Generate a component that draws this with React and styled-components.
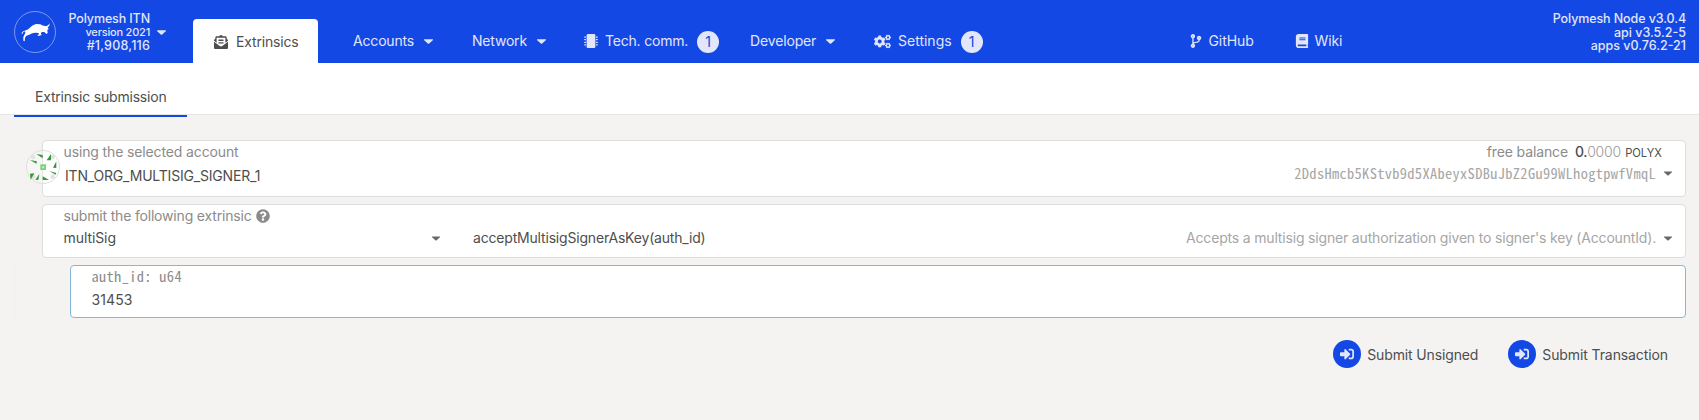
import React from "react";
import styled, { createGlobalStyle } from "styled-components";
import {
  FaBook,
  FaCaretDown,
  FaCodeBranch,
  FaCogs,
  FaEnvelopeOpenText,
  FaMicrochip,
  FaQuestionCircle,
  FaSignInAlt,
} from "react-icons/fa";

const blue = "#1348e4";
const onBlue = "#e1e6f9";

const GlobalStyle = createGlobalStyle`
  * { box-sizing: border-box; }
  body {
    margin: 0;
    background: #f4f3f1;
    color: #4e4e4e;
    font: 400 14px/20px Inter, "Liberation Sans", sans-serif;
  }
`;

const Page = styled.div`
  min-height: 420px;
  overflow: hidden;
`;

const Text = styled.span`
  white-space: nowrap;
  letter-spacing: ${(p) => p.$track || 0}px;
`;

/* Top bar */

const Header = styled.header`
  display: flex;
  height: 63px;
  padding: 0 13px 0 14px;
  background: ${blue};
  color: ${onBlue};
`;

const Chain = styled.div`
  display: flex;
  align-items: flex-start;
  width: 179px;
  padding-top: 11px;
`;

const Logo = styled.svg`
  width: 42px;
  height: 42px;
  flex: none;
`;

const Lines = styled.div`
  display: flex;
  flex-direction: column;
  align-items: flex-end;
  flex: none;
  font-size: 12.5px;
  font-weight: 450;
  line-height: 13.5px;
`;

const ChainLines = styled(Lines)`
  width: 94px;
  padding-top: 1px;
  font-weight: 500;
`;

const Version = styled(Text)`
  font-size: 11px;
`;

const Caret = styled(FaCaretDown)`
  flex: none;
  width: ${(p) => p.$width || 9}px;
  height: 14px;
  transform: scaleX(1.1);
`;

const ChainCaret = styled(Caret)`
  margin: 14px 0 0 7px;
`;

const Nav = styled.nav`
  display: flex;
  flex: 1;
`;

const ActiveTab = styled.a`
  display: flex;
  align-items: center;
  gap: 8px;
  width: 125px;
  height: 44px;
  margin: 19px 35px 0 0;
  padding: 1px 0 0 21px;
  border-radius: 4px 4px 0 0;
  background: #fff;
  color: #4e4e4e;
`;

const NavItem = styled.a`
  display: flex;
  align-items: center;
  gap: ${(p) => p.$gap || 7}px;
  width: ${(p) => p.$width}px;
  height: 22px;
  margin-top: 30px;
`;

const NavCaret = styled(Caret)`
  margin-left: 3px;
`;

const Badge = styled.span`
  width: 22px;
  height: 22px;
  margin: 2px 0 0 2px;
  border-radius: 50%;
  background: ${onBlue};
  color: ${blue};
  line-height: 22px;
  text-align: center;
`;

const Versions = styled(Lines)`
  padding-top: 12px;
`;

/* Sub navigation */

const Tabs = styled.div`
  height: 52px;
  padding-left: 14px;
  border-bottom: 1px solid #e6e5e4;
  background: #fff;
`;

const Tab = styled.div`
  width: 173px;
  height: 54px;
  padding: 24px 0 0 21px;
  border-bottom: 2px solid ${blue};
`;

/* Form */

const Form = styled.main`
  display: flex;
  flex-direction: column;
  padding: 25px 13px 0 42px;
`;

const Card = styled.section`
  position: relative;
  display: flex;
  height: ${(p) => p.$height}px;
  margin-bottom: 7px;
  padding: 1px 13px 0 20.5px;
  border: 1px solid #dcdddd;
  border-radius: 4px;
  background: #fff;
`;

const FocusedCard = styled(Card)`
  margin: 0 0 0 28px;
  padding-top: 0;
  border-color: #85b7d9;
`;

const Column = styled.div`
  display: flex;
  flex-direction: column;
  align-items: ${(p) => (p.$end ? "flex-end" : "flex-start")};
  gap: ${(p) => p.$gap || 0}px;
  flex: ${(p) => (p.$width ? `0 0 ${p.$width}px` : "1")};
`;

const FormLabel = styled(Text)`
  display: flex;
  align-items: center;
  color: #8b8b8b;
`;

const MonoLabel = styled(FormLabel)`
  font-family: "Noto Sans Mono CJK SC", "DejaVu Sans Mono", monospace;
  font-size: 14.4px;
`;

const AccountName = styled(Text)`
  padding-left: 1.5px;
`;

const HelpIcon = styled(FaQuestionCircle)`
  width: 14px;
  height: 14px;
  margin-left: 4.5px;
`;

const Hint = styled(Text)`
  color: #a6a6a6;
`;

const Address = styled(Hint)`
  font-family: "Noto Sans Mono CJK SC", "DejaVu Sans Mono", monospace;
  font-size: 14.4px;
`;

const Select = styled.div`
  display: flex;
  align-items: center;
  gap: 8px;
`;

const SelectCaret = styled(Caret)`
  color: #686868;
`;

const Balance = styled.div`
  display: flex;
  align-items: baseline;
  margin-right: 10px;
`;

const Amount = styled(Text)`
  margin-left: 7px;
  font-weight: 500;
`;

const Decimals = styled(Text)`
  color: #999;
  font-weight: 300;
`;

const Unit = styled(Text)`
  margin-left: 4px;
  font-size: 11.2px;
`;

const Identicon = styled.svg`
  position: absolute;
  top: 9px;
  left: -17px;
  width: 34px;
  height: 34px;
`;

const Method = styled.div`
  display: flex;
  flex: 1;
  align-items: center;
  height: 20px;
  margin-top: 22px;
`;

const SectionCaret = styled(SelectCaret)`
  margin: 0 33px 0 -40px;
`;

const MethodHint = styled(Hint)`
  margin: 0 8px 0 auto;
`;

const Params = styled.div`
  position: relative;

  &::before {
    content: "";
    position: absolute;
    top: -1px;
    left: -28px;
    width: 2px;
    height: 57px;
    background: #f1f1f0;
  }
`;

const Actions = styled.div`
  display: flex;
  justify-content: flex-end;
  gap: 30px;
  margin: 22px 18px 0 0;
`;

const Action = styled.button`
  display: flex;
  align-items: center;
  gap: 6px;
  padding: 0;
  border: 0;
  background: none;
  color: inherit;
  font: inherit;
`;

const ActionIcon = styled.span`
  display: grid;
  place-items: center;
  width: 28px;
  height: 28px;
  border-radius: 50%;
  background: ${blue};
  color: ${onBlue};
`;

const ActionText = styled(Text)`
  padding-top: 2px;
`;

const triangles = [
  "43,24 62,27 62,37",
  "87,24 87,43 74,43",
  "103,46 103,66 93,65",
  "82,75 103,81 101,86",
  "62,91 81,102 62,102",
  "52,84 49,102 40,101",
  "24,83 37,82 26,101",
  "24,42 44,46 44,53",
];

const dots = [
  [33, 33],
  [92, 33],
  [92, 92],
  [33, 92],
];

function BullLogo() {
  return (
    <Logo viewBox="0 0 126 126">
      <circle cx="63" cy="63" r="61.5" fill="none" stroke="#fff" strokeOpacity=".55" strokeWidth="2.4" />
      <path
        fill="#fff"
        d="M22 67Q26 59 36 58Q43 56 49 49Q56 41 66 39L79 40Q85 45 91 44L96 46Q103 44 107 37Q108 45 101 49L104 54L100 57L101 66L97 69L91 63L84 63L80 67L83 72L73 75L70 72L76 70L73 66Q60 64 50 69Q44 72 37 74L33 80L32 91L28 89L28 78L34 66L33 61Q27 62 25 69z"
      />
    </Logo>
  );
}

function AccountIdenticon() {
  return (
    <Identicon viewBox="12 12 102 102">
      <circle cx="63" cy="63" r="49.5" fill="#fff" fillOpacity=".25" stroke="#dedede" strokeWidth="3" />
      {dots.map(([x, y]) => (
        <circle key={`${x}-${y}`} cx={x} cy={y} r="7" fill="#e2e2e2" />
      ))}
      {triangles.map((points) => (
        <polygon key={points} points={points} fill="#329837" />
      ))}
      <rect x="55" y="55" width="17" height="17" fill="#74d477" />
      <path d="M63.500 59l4.500 4.500l-4.500 4.500l-4.500-4.500z" fill="#c5edc5" />
    </Identicon>
  );
}

export default function App() {
  return (
    <Page>
      <GlobalStyle />
      <Header>
        <Chain>
          <BullLogo />
          <ChainLines>
            <Text $track={-0.12}>Polymesh ITN</Text>
            <Version $track={-0.2}>version 2021</Version>
            <Text $track={0.2}>#1,908,116</Text>
          </ChainLines>
          <ChainCaret />
        </Chain>
        <Nav>
          <ActiveTab>
            <FaEnvelopeOpenText size={14} />
            <Text $track={-0.17}>Extrinsics</Text>
          </ActiveTab>
          <NavItem $width={119}>
            <Text $track={-0.17}>Accounts</Text>
            <NavCaret />
          </NavItem>
          <NavItem $width={112}>
            <Text $track={-0.2}>Network</Text>
            <NavCaret />
          </NavItem>
          <NavItem $width={166}>
            <FaMicrochip size={14} />
            <Text $track={-0.2}>Tech. comm.</Text>
            <Badge>1</Badge>
          </NavItem>
          <NavItem $width={124}>
            <Text $track={-0.15}>Developer</Text>
            <NavCaret />
          </NavItem>
          <NavItem $width={315}>
            <FaCogs size={17} />
            <Text>Settings</Text>
            <Badge>1</Badge>
          </NavItem>
          <NavItem $width={106} $gap={5.5}>
            <FaCodeBranch size={14} />
            <Text $track={-0.08}>GitHub</Text>
          </NavItem>
          <NavItem $width={60} $gap={5.5}>
            <FaBook size={14} />
            <Text $track={-0.1}>Wiki</Text>
          </NavItem>
        </Nav>
        <Versions>
          <Text $track={-0.1}>Polymesh Node v3.0.4</Text>
          <Text>api v3.5.2-5</Text>
          <Text>apps v0.76.2-21</Text>
        </Versions>
      </Header>

      <Tabs>
        <Tab>
          <Text $track={-0.2}>Extrinsic submission</Text>
        </Tab>
      </Tabs>

      <Form>
        <Card $height={57}>
          <AccountIdenticon />
          <Column $gap={4}>
            <FormLabel $track={-0.13}>using the selected account</FormLabel>
            <AccountName $track={-0.19}>ITN_ORG_MULTISIG_SIGNER_1</AccountName>
          </Column>
          <Column $end>
            <Balance>
              <FormLabel $track={-0.12}>free balance</FormLabel>
              <Amount $track={-0.4}>0.</Amount>
              <Decimals $track={-0.15}>0000</Decimals>
              <Unit>POLYX</Unit>
            </Balance>
            <Select>
              <Address $track={0.34}>2DdsHmcb5KStvb9d5XAbeyxSDBuJbZ2Gu99WLhogtpwfVmqL</Address>
              <SelectCaret $width={8} />
            </Select>
          </Column>
        </Card>

        <Card $height={54}>
          <Column $width={408.5} $gap={2}>
            <FormLabel $track={-0.18}>
              submit the following extrinsic
              <HelpIcon />
            </FormLabel>
            <Text $track={-0.08}>multiSig</Text>
          </Column>
          <Method>
            <SectionCaret $width={8} />
            <Text $track={-0.185}>acceptMultisigSignerAsKey(auth_id)</Text>
            <MethodHint $track={-0.176}>
              Accepts a multisig signer authorization given to signer's key (AccountId).
            </MethodHint>
            <SelectCaret $width={8} />
          </Method>
        </Card>

        <Params>
          <FocusedCard $height={53}>
            <Column $gap={4}>
              <MonoLabel $track={0.34}>auth_id: u64</MonoLabel>
              <Text $track={0.1}>31453</Text>
            </Column>
          </FocusedCard>
        </Params>

        <Actions>
          <Action>
            <ActionIcon>
              <FaSignInAlt size={14} />
            </ActionIcon>
            <ActionText $track={-0.14}>Submit Unsigned</ActionText>
          </Action>
          <Action>
            <ActionIcon>
              <FaSignInAlt size={14} />
            </ActionIcon>
            <ActionText $track={-0.1}>Submit Transaction</ActionText>
          </Action>
        </Actions>
      </Form>
    </Page>
  );
}
